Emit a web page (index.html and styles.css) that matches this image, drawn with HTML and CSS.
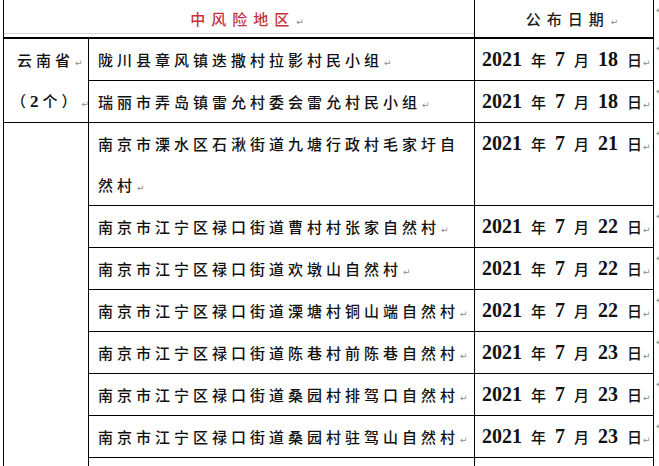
FILE: index.html
```html
<!DOCTYPE html>
<html lang="zh">
<head>
<meta charset="utf-8">
<title>中风险地区</title>
<link rel="stylesheet" href="styles.css">
</head>
<body>
<table class="risk">
  <colgroup>
    <col class="c-prov">
    <col class="c-place">
    <col class="c-date">
    <col class="c-mark">
  </colgroup>
  <thead>
    <tr>
      <th class="h-area" colspan="2">中风险地区<span class="pm">↵</span></th>
      <th class="h-date">公布日期<span class="pm">↵</span></th>
      <td class="rm">↵</td>
    </tr>
  </thead>
  <tbody>
    <tr>
      <td class="prov" rowspan="2">
        <div class="p1">云南省<span class="pm">↵</span></div>
        <div class="p2">（<span class="n">2</span>个）<span class="pm">↵</span></div>
      </td>
      <td class="place">陇川县章风镇迭撒村拉影村民小组<span class="pm">↵</span></td>
      <td class="date">2021 <span class="cj">年</span> 7 <span class="cj">月</span> 18 <span class="cj">日</span><span class="pm">↵</span></td>
      <td class="rm">↵</td>
    </tr>
    <tr>
      <td class="place">瑞丽市弄岛镇雷允村委会雷允村民小组<span class="pm">↵</span></td>
      <td class="date">2021 <span class="cj">年</span> 7 <span class="cj">月</span> 18 <span class="cj">日</span><span class="pm">↵</span></td>
      <td class="rm">↵</td>
    </tr>
    <tr>
      <td class="prov" rowspan="9"></td>
      <td class="place">南京市溧水区石湫街道九塘行政村毛家圩自然村<span class="pm">↵</span></td>
      <td class="date">2021 <span class="cj">年</span> 7 <span class="cj">月</span> 21 <span class="cj">日</span><span class="pm">↵</span></td>
      <td class="rm">↵</td>
    </tr>
    <tr>
      <td class="place">南京市江宁区禄口街道曹村村张家自然村<span class="pm">↵</span></td>
      <td class="date">2021 <span class="cj">年</span> 7 <span class="cj">月</span> 22 <span class="cj">日</span><span class="pm">↵</span></td>
      <td class="rm">↵</td>
    </tr>
    <tr>
      <td class="place">南京市江宁区禄口街道欢墩山自然村<span class="pm">↵</span></td>
      <td class="date">2021 <span class="cj">年</span> 7 <span class="cj">月</span> 22 <span class="cj">日</span><span class="pm">↵</span></td>
      <td class="rm">↵</td>
    </tr>
    <tr>
      <td class="place">南京市江宁区禄口街道溧塘村铜山端自然村<span class="pm">↵</span></td>
      <td class="date">2021 <span class="cj">年</span> 7 <span class="cj">月</span> 22 <span class="cj">日</span><span class="pm">↵</span></td>
      <td class="rm">↵</td>
    </tr>
    <tr>
      <td class="place">南京市江宁区禄口街道陈巷村前陈巷自然村<span class="pm">↵</span></td>
      <td class="date">2021 <span class="cj">年</span> 7 <span class="cj">月</span> 23 <span class="cj">日</span><span class="pm">↵</span></td>
      <td class="rm">↵</td>
    </tr>
    <tr>
      <td class="place">南京市江宁区禄口街道桑园村排驾口自然村<span class="pm">↵</span></td>
      <td class="date">2021 <span class="cj">年</span> 7 <span class="cj">月</span> 23 <span class="cj">日</span><span class="pm">↵</span></td>
      <td class="rm">↵</td>
    </tr>
    <tr>
      <td class="place">南京市江宁区禄口街道桑园村驻驾山自然村<span class="pm">↵</span></td>
      <td class="date">2021 <span class="cj">年</span> 7 <span class="cj">月</span> 23 <span class="cj">日</span><span class="pm">↵</span></td>
      <td class="rm">↵</td>
    </tr>
    <tr>
      <td class="place">&nbsp;</td>
      <td class="date">&nbsp;</td>
      <td class="rm">↵</td>
    </tr>
  </tbody>
</table>
</body>
</html>
```

FILE: styles.css
```css
html, body {
  margin: 0;
  padding: 0;
  background: #ffffff;
  overflow: hidden;
}

body {
  font-family: "Noto Sans CJK SC", sans-serif;
  color: #111111;
}

.risk {
  margin-left: 3px;
  border-collapse: collapse;
  table-layout: fixed;
  width: 660px;
}

.c-prov { width: 85px; }
.c-place { width: 386px; }
.c-date { width: 179px; }
.c-mark { width: 10px; }

.risk th,
.risk td {
  border: 1px solid #000;
  padding: 0;
  vertical-align: top;
  text-align: left;
  font-weight: 500;
  line-height: 41px;
  white-space: normal;
}

.risk th {
  border-top: none;
  border-bottom: 2px solid #000;
  line-height: 37px;
  font-size: 15px;
  letter-spacing: 6px;
  text-align: center;
}

.risk th.h-area {
  color: #c4333a;
  padding-left: 6px;
  background: linear-gradient(to bottom, transparent 33px, #d4d4d4 33px, #d4d4d4 34px, transparent 34px);
}

.risk th.h-date {
  color: #1c1c1c;
  padding-left: 6px;
}

.risk td.prov {
  font-size: 15px;
  letter-spacing: 4px;
  padding-left: 13px;
}

.prov .p1,
.prov .p2 {
  white-space: nowrap;
  height: 41px;
}

.prov .p2 {
  text-indent: -6px;
}

.prov .p2 .n {
  font-family: "Liberation Serif", serif;
  font-weight: 700;
  font-size: 17px;
  line-height: 1;
}

.risk td.place {
  font-size: 15px;
  letter-spacing: 4px;
  padding-left: 9px;
  padding-right: 6px;
}

.risk td.date {
  font-family: "Liberation Serif", "Noto Sans CJK SC", serif;
  font-weight: 700;
  font-size: 20px;
  word-spacing: 4px;
  padding-left: 7px;
  white-space: nowrap;
}

.date .cj {
  font-family: "Noto Sans CJK SC", sans-serif;
  font-weight: 500;
  font-size: 15px;
  line-height: 1;
}

.pm {
  font-family: "DejaVu Sans", sans-serif;
  font-weight: 400;
  font-size: 9px;
  line-height: 1;
  letter-spacing: 0;
  word-spacing: 0;
  color: #8a8a8a;
  margin-left: 1px;
}

.risk th .pm {
  margin-right: -10px;
}

.risk td.rm {
  border: none;
  border-left: 1px solid #000;
  font-family: "DejaVu Sans", sans-serif;
  font-weight: 400;
  font-size: 9px;
  line-height: 10px;
  color: #8a8a8a;
  padding-top: 5px;
  padding-left: 2px;
}

.risk thead td.rm {
  border-bottom: none;
}
```
